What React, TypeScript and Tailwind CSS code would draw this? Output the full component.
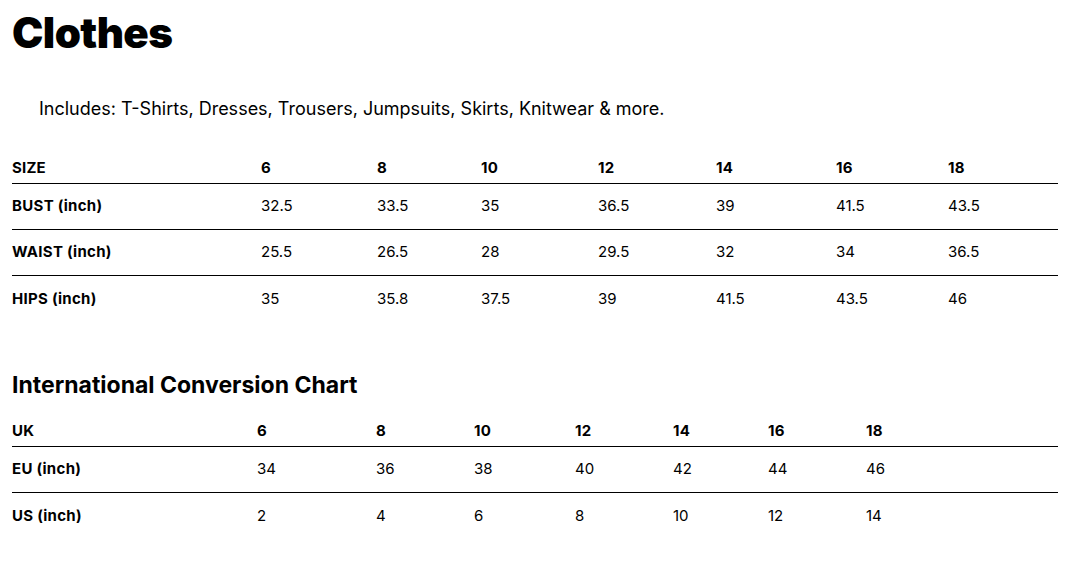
const sizeCols = "grid-cols-[249px_116px_104px_117px_118px_120px_112px_1fr]";
const convCols = "grid-cols-[245px_119px_98px_101px_98px_95px_98px_1fr]";

const sizeRows = [
  { label: "BUST (inch)", values: ["32.5", "33.5", "35", "36.5", "39", "41.5", "43.5"] },
  { label: "WAIST (inch)", values: ["25.5", "26.5", "28", "29.5", "32", "34", "36.5"] },
  { label: "HIPS (inch)", values: ["35", "35.8", "37.5", "39", "41.5", "43.5", "46"] },
];

const convRows = [
  { label: "EU (inch)", values: ["34", "36", "38", "40", "42", "44", "46"] },
  { label: "US (inch)", values: ["2", "4", "6", "8", "10", "12", "14"] },
];

const sizes = ["6", "8", "10", "12", "14", "16", "18"];

function SizeTable({
  cols,
  head,
  rows,
}: {
  cols: string;
  head: string;
  rows: { label: string; values: string[] }[];
}) {
  return (
    <div className="w-[1046px] text-[15px] text-black">
      <div className={`grid ${cols} h-[31px] items-center border-b border-black font-bold tracking-[0.2px]`}>
        <div>{head}</div>
        {sizes.map((s) => (
          <div key={s}>{s}</div>
        ))}
      </div>
      {rows.map((r, i) => (
        <div
          key={r.label}
          className={`grid ${cols} h-[46px] items-center ${i < rows.length - 1 ? "border-b border-black" : ""}`}
        >
          <div className="font-bold tracking-[0.3px]">{r.label}</div>
          {r.values.map((v, j) => (
            <div key={j}>{v}</div>
          ))}
        </div>
      ))}
    </div>
  );
}

export default function App() {
  return (
    <div className="min-h-[575px] w-[1070px] bg-white pl-3 font-['Inter',sans-serif] text-black">
      <h1 className="pt-[7px] text-[42px] font-black leading-[52px] tracking-[-0.6px]">Clothes</h1>

      <p className="mt-[38px] pl-[27px] text-[18px] leading-[24px]">
        Includes: T-Shirts, Dresses, Trousers, Jumpsuits, Skirts, Knitwear &amp; more.
      </p>

      <div className="mt-[32px]">
        <SizeTable cols={sizeCols} head="SIZE" rows={sizeRows} />
      </div>

      {/* conversion chart */}
      <h2 className="mt-[48px] text-[23px] font-bold leading-[30px]">International Conversion Chart</h2>

      <div className="mt-[16px]">
        <SizeTable cols={convCols} head="UK" rows={convRows} />
      </div>
    </div>
  );
}
